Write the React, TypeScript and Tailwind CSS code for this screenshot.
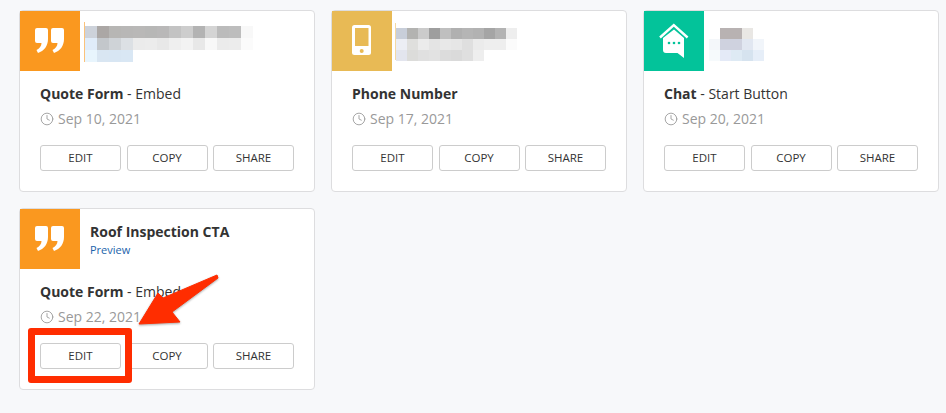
import { Clock } from "lucide-react";

type Blur = { rows: string[][]; className: string; cell: string };

const quoteBlur = [
  ["bg-[#cdd2da]", "bg-[#aba7a5]", "bg-[#b7b6b4]", "bg-[#b8b7b6]", "bg-[#b9b8b7]", "bg-[#b7b7b6]", "bg-[#b9b8b8]", "bg-[#c3c3c3]", "bg-[#cdcdcd]", "bg-[#b3b3b3]", "bg-[#d4d4d4]", "bg-[#bbbbbb]", "bg-[#bdbdbd]", "bg-[#f8f8f8]"],
  ["bg-[#e0ecf9]", "bg-[#c3c7cb]", "bg-[#cfd3d7]", "bg-[#dce0e4]", "bg-[#ebebeb]", "bg-[#ececec]", "bg-[#e8e8e8]", "bg-[#efefef]", "bg-[#f3f3f3]", "bg-[#e8e8e8]", "bg-[#f8f8f8]", "bg-[#ebebeb]", "bg-[#ececec]", "bg-[#fbfbfb]"],
  ["bg-[#e8f5fd]", "bg-[#d9e6f2]", "bg-[#d8e6f3]", "bg-[#d9e7f4]"],
];

const phoneBlur = [
  ["bg-[#c8ced9]", "bg-[#b3b3b1]", "bg-[#cbcbcb]", "bg-[#9e9e9e]", "bg-[#bfbfbf]", "bg-[#b0b0b0]", "bg-[#b5b5b5]", "bg-[#b2b2b2]", "bg-[#a5a5a5]", "bg-[#b3b3b3]", "bg-[#eeeeee]"],
  ["bg-[#eceef4]", "bg-[#dfdfdd]", "bg-[#ebebeb]", "bg-[#e4e4e4]", "bg-[#e8e8e8]", "bg-[#e6e6e6]", "bg-[#dfdfdf]", "bg-[#ebebeb]", "bg-[#eeeeee]", "bg-[#eeeeee]", "bg-[#fbfbfb]"],
  ["bg-[#e3e5ee]", "bg-[#dcdcda]", "bg-[#e0e0e0]", "bg-[#e2e2e2]", "bg-[#dcdcdc]", "bg-[#dadada]", "bg-[#dfdfdf]", "bg-[#eeeeee]"],
];

const chatBlur = [
  ["bg-[#ffffff]", "bg-[#b8b2b2]", "bg-[#b8b2b2]", "bg-[#e9e7e4]"],
  ["bg-[#f4f7fa]", "bg-[#cfd2df]", "bg-[#cfd2df]", "bg-[#e1e7f1]", "bg-[#f1f5fa]"],
  ["bg-[#f6fafc]", "bg-[#e4eaf7]", "bg-[#deeaf4]", "bg-[#d6e3ef]", "bg-[#e6eef8]"],
];

function QuoteIcon() {
  return (
    <svg width="60" height="60" viewBox="0 0 60 60" fill="#fff">
      <path d="M17 17h9a2 2 0 0 1 2 2v9c0 7-4 12-10 14l-1.500-3c3-1.500 5-4 5-7h-4.500a2 2 0 0 1-2-2v-11a2 2 0 0 1 2-2z" />
      <path d="M33 17h9a2 2 0 0 1 2 2v9c0 7-4 12-10 14l-1.500-3c3-1.500 5-4 5-7h-4.500a2 2 0 0 1-2-2v-11a2 2 0 0 1 2-2z" />
    </svg>
  );
}

function PhoneIcon() {
  return (
    <svg width="60" height="60" viewBox="0 0 60 60">
      <rect x="20" y="14" width="19" height="30" rx="2.500" fill="#fff" />
      <rect x="23" y="17" width="13.500" height="18" fill="#e8ba55" />
      <circle cx="29.700" cy="40" r="2" fill="#e8ba55" />
    </svg>
  );
}

function ChatHomeIcon() {
  return (
    <svg width="60" height="60" viewBox="0 0 60 60">
      <path d="M16 26.500 29.800 14l13.800 12.500" fill="none" stroke="#fff" strokeWidth="2.400" />
      <path d="M30 18.500 40 27v20l-6.500-5H22a3 3 0 0 1-3-3V27z" fill="#fff" />
      <circle cx="25" cy="32" r="1.300" fill="#03c39a" />
      <circle cx="30" cy="32" r="1.300" fill="#03c39a" />
      <circle cx="35" cy="32" r="1.300" fill="#03c39a" />
    </svg>
  );
}

function PixelBlur({ rows, className, cell }: Blur) {
  return (
    <div className={className}>
      {rows.map((row, i) => (
        <div key={i} className="flex">
          {row.map((color, j) => (
            <div key={j} className={`${cell} ${color}`} />
          ))}
        </div>
      ))}
    </div>
  );
}

function Card({
  tile,
  icon,
  head,
  title,
  kind,
  date,
}: {
  tile: string;
  icon: React.ReactNode;
  head: React.ReactNode;
  title: string;
  kind?: string;
  date: string;
}) {
  return (
    <div className="h-[181.500px] rounded border border-[#dddddf] bg-white">
      <div className="flex h-[60px]">
        <div className={`h-[60px] w-[60px] shrink-0 ${tile}`}>{icon}</div>
        {head}
      </div>
      <div className="pl-5 pr-[19.500px] pt-[13px]">
        <p className="text-[14px] leading-[20px] text-[#333]">
          <span className="font-bold">{title}</span>
          {kind && ` - ${kind}`}
        </p>
        <p className="mt-[5px] flex items-center gap-1 text-[14px] leading-[20px] text-[#999]">
          <Clock size={14} strokeWidth={1.5} />
          {date}
        </p>
        <div className="mt-4 flex gap-[5.500px]">
          {["EDIT", "COPY", "SHARE"].map((label) => (
            <button
              key={label}
              className="h-[26px] flex-1 rounded-[3px] border border-[#ccc] bg-white text-[11.500px] text-[#333]"
            >
              {label}
            </button>
          ))}
        </div>
      </div>
    </div>
  );
}

export default function App() {
  return (
    <div className="relative h-[413px] w-[946px] overflow-hidden bg-[#f7f8fa] pl-[19px] pt-[10px] font-['Open_Sans',sans-serif]">
      <div className="grid grid-cols-[repeat(3,295.500px)] gap-x-[16.500px] gap-y-[16.500px]">
        <Card
          tile="bg-[#fa981f]"
          icon={<QuoteIcon />}
          title="Quote Form"
          kind="Embed"
          date="Sep 10, 2021"
          head={
            <div className="ml-1 mt-[11px] h-10 border-l border-[#fbc27a] pt-[4px]">
              <PixelBlur rows={quoteBlur} className="" cell="h-3 w-3" />
            </div>
          }
        />
        <Card
          tile="bg-[#e8ba55]"
          icon={<PhoneIcon />}
          title="Phone Number"
          date="Sep 17, 2021"
          head={
            <div className="ml-[3px] mt-[12px] h-[37px] border-l border-[#f3d9a3] pt-[5px]">
              <PixelBlur rows={phoneBlur} className="" cell="h-[11px] w-[11px]" />
            </div>
          }
        />
        <Card
          tile="bg-[#03c39a]"
          icon={<ChatHomeIcon />}
          title="Chat"
          kind="Start Button"
          date="Sep 20, 2021"
          head={<PixelBlur rows={chatBlur} className="ml-[5px] mt-[17px]" cell="h-[11px] w-[11px]" />}
        />
        <Card
          tile="bg-[#fa981f]"
          icon={<QuoteIcon />}
          title="Quote Form"
          kind="Embed"
          date="Sep 22, 2021"
          head={
            <div className="ml-[10px] pt-[13px]">
              <p className="text-[14px] font-bold leading-[20px] text-[#333]">Roof Inspection CTA</p>
              <p className="text-[11px] leading-[16px] text-[#1a63ab]">Preview</p>
            </div>
          }
        />
      </div>

      {/* red callout drawn over the screenshot */}
      <div className="absolute left-[28px] top-[328px] h-[55px] w-[104px] rounded-[3px] border-[7px] border-[#ff2d00]" />
      <svg
        className="absolute left-[130px] top-[270px] drop-shadow-[0_1px_1px_rgba(0,0,0,0.35)]"
        width="95"
        height="62"
        viewBox="0 0 95 62"
      >
        <path d="M9 54 28 23l5 5L87 5l1 3-46 34 8 10Z" fill="#ff2d00" stroke="#ff2d00" strokeLinejoin="round" />
      </svg>
    </div>
  );
}
